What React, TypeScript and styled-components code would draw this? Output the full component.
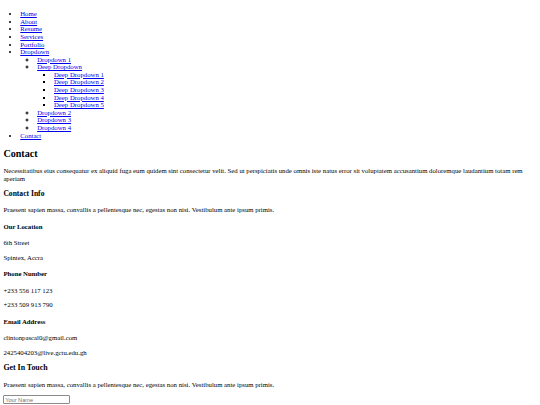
import React from "react";
import styled, { createGlobalStyle } from "styled-components";

const S = 0.421875;
const px = (v: number) => `${(v * S).toFixed(3)}px`;

const Global = createGlobalStyle`
  html, body { background: #ffffff; }
  body {
    margin: ${px(8)};
    font-family: "Liberation Serif", "Times New Roman", serif;
    font-size: ${px(16)};
    line-height: 1.125;
    color: #000000;
  }
`;

const Nav = styled.nav``;

const Menu = styled.ul<{ $level: number }>`
  margin: ${(p) => (p.$level === 0 ? `${px(16)} 0` : "0")};
  padding-left: ${px(40)};
  list-style-type: ${(p) => (p.$level === 0 ? "disc" : p.$level === 1 ? "circle" : "square")};
`;

const MenuItem = styled.li``;

const MenuLink = styled.a`
  color: #0000ee;
  text-decoration: underline;
`;

const Section = styled.section``;

const Title = styled.h2`
  font-size: ${px(24)};
  margin: ${px(19.92)} 0;
  font-weight: bold;
`;

const SubTitle = styled.h3<{ $size: number }>`
  font-size: ${(p) => px(p.$size)};
  margin: ${(p) => px(p.$size)} 0;
  font-weight: bold;
`;

const Label = styled.h4`
  font-size: ${px(16)};
  margin: ${px(21.28)} 0;
  font-weight: bold;
`;

const Text = styled.p`
  margin: ${px(16)} 0;
`;

const Form = styled.form``;

const TextInput = styled.input`
  display: block;
  box-sizing: content-box;
  width: ${px(150)};
  height: ${px(15)};
  padding: ${px(1)} ${px(2)};
  margin: 0 0 ${px(2)} 0;
  border: 1px solid #8a8a8a;
  border-radius: 1px;
  font-family: "Liberation Sans", Arial, sans-serif;
  font-size: ${px(13.33)};
  color: #000;
  background: #fff;
  &::placeholder { color: #757575; }
`;

const deep = [1, 2, 3, 4, 5].map((n) => `Deep Dropdown ${n}`);

export default function App() {
  return (
    <>
      <Global />
      <Nav>
        <Menu $level={0}>
          {["Home", "About", "Resume", "Services", "Portfolio"].map((t) => (
            <MenuItem key={t}>
              <MenuLink href="#">{t}</MenuLink>
            </MenuItem>
          ))}
          <MenuItem>
            <MenuLink href="#">Dropdown</MenuLink>
            <Menu $level={1}>
              <MenuItem>
                <MenuLink href="#">Dropdown 1</MenuLink>
              </MenuItem>
              <MenuItem>
                <MenuLink href="#">Deep Dropdown</MenuLink>
                <Menu $level={2}>
                  {deep.map((t) => (
                    <MenuItem key={t}>
                      <MenuLink href="#">{t}</MenuLink>
                    </MenuItem>
                  ))}
                </Menu>
              </MenuItem>
              {["Dropdown 2", "Dropdown 3", "Dropdown 4"].map((t) => (
                <MenuItem key={t}>
                  <MenuLink href="#">{t}</MenuLink>
                </MenuItem>
              ))}
            </Menu>
          </MenuItem>
          <MenuItem>
            <MenuLink href="#">Contact</MenuLink>
          </MenuItem>
        </Menu>
      </Nav>
      <Section>
        <Title>Contact</Title>
        <Text>
          Necessitatibus eius consequatur ex aliquid fuga eum quidem sint consectetur velit. Sed ut
          perspiciatis unde omnis iste natus error sit voluptatem accusantium doloremque laudantium
          totam rem aperiam
        </Text>
        <SubTitle $size={18}>Contact Info</SubTitle>
        <Text>Praesent sapien massa, convallis a pellentesque nec, egestas non nisi. Vestibulum ante ipsum primis.</Text>
        <Label>Our Location</Label>
        <Text>6th Street</Text>
        <Text>Spintex, Accra</Text>
        <Label>Phone Number</Label>
        <Text>+233 556 117 123</Text>
        <Text>+233 509 913 790</Text>
        <Label>Email Address</Label>
        <Text>clintonpascal0@gmail.com</Text>
        <Text>2425404203@live.gctu.edu.gh</Text>
        <SubTitle $size={18.72}>Get In Touch</SubTitle>
        <Text>Praesent sapien massa, convallis a pellentesque nec, egestas non nisi. Vestibulum ante ipsum primis.</Text>
        <Form>
          <TextInput type="text" placeholder="Your Name" />
          <TextInput type="email" placeholder="Your Email" />
          <TextInput type="text" placeholder="Subject" />
        </Form>
      </Section>
    </>
  );
}
